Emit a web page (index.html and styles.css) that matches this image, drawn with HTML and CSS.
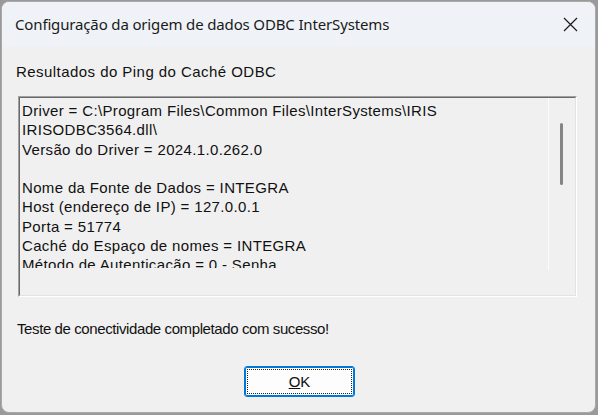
FILE: index.html
```html
<!DOCTYPE html>
<html lang="pt">
<head>
  <meta charset="UTF-8">
  <title>Configuração da origem de dados ODBC InterSystems</title>
  <link rel="stylesheet" href="styles.css">
</head>
<body>
  <div class="window">
    <div class="titlebar">
      <span class="title">Configuração da origem de dados ODBC InterSystems</span>
      <svg class="close" width="15" height="15" viewBox="0 0 15 15">
        <path d="M1 1 L14 14 M14 1 L1 14" stroke="#1a1a1a" stroke-width="1.2" fill="none"/>
      </svg>
    </div>

    <div class="content">
      <p class="label">Resultados do Ping do Caché ODBC</p>

      <div class="output">
        <div class="output-inner">
          <div class="lines">
            <div>Driver = C:\Program Files\Common Files\InterSystems\IRIS</div>
            <div>IRISODBC3564.dll\</div>
            <div>Versão do Driver = 2024.1.0.262.0</div>
            <div>&nbsp;</div>
            <div>Nome da Fonte de Dados = INTEGRA</div>
            <div>Host (endereço de IP) = 127.0.0.1</div>
            <div>Porta = 51774</div>
            <div>Caché do Espaço de nomes = INTEGRA</div>
            <div>Método de Autenticação = 0 - Senha</div>
          </div>
          <div class="scroll">
            <div class="thumb"></div>
          </div>
        </div>
      </div>

      <p class="status">Teste de conectividade completado com sucesso!</p>

      <div class="actions">
        <button class="ok"><span class="focus"><u>O</u>K</span></button>
      </div>
    </div>
  </div>
</body>
</html>
```

FILE: styles.css
```css
body {
  margin: 0;
  background: #9a9a9a;
  width: 598px;
  height: 415px;
  overflow: hidden;
}

.window {
  margin: 1px 0 0 1px;
  width: 593px;
  height: 410px;
  border: 1px solid #a9a9a9;
  border-radius: 8px;
  background: #f0f0f0;
  overflow: hidden;
  display: flex;
  flex-direction: column;
}

.titlebar {
  height: 45px;
  flex-shrink: 0;
  background: #eff3f8;
  display: flex;
  align-items: center;
  justify-content: space-between;
  padding: 0 17px 0 13px;
}

.title {
  font-family: "Noto Sans", sans-serif;
  font-size: 15px;
  letter-spacing: -0.15px;
  color: #1a1a1a;
  margin-top: -1px;
}

.close {
  margin-top: -1px;
}

.content {
  padding: 0 18px 0 16px;
  font-family: "Liberation Sans", Arial, sans-serif;
  font-size: 15px;
  color: #111;
}

.label {
  margin: 16px 0 0 -2px;
  line-height: 17px;
  letter-spacing: 0.45px;
}

.output {
  margin: 16px 0 0 0;
  border: 1px solid;
  border-color: #a0a0a0 #ffffff #ffffff #a0a0a0;
}

.output-inner {
  height: 197px;
  border: 1px solid;
  border-color: #696969 #e3e3e3 #e3e3e3 #696969;
  display: flex;
  align-items: flex-start;
}

.lines {
  flex: 1;
  box-sizing: border-box;
  height: 170px;
  overflow: hidden;
  padding: 3px 0 0 2px;
  line-height: 19.3px;
  letter-spacing: 0.35px;
  white-space: nowrap;
}

.scroll {
  width: 26px;
  height: 172px;
  border-left: 1px solid #fbfbfb;
}

.thumb {
  width: 3px;
  height: 62px;
  margin: 25px 0 0 11px;
  background: #858585;
  border-radius: 2px;
}

.status {
  margin: 23px 0 0 -1px;
  line-height: 17px;
  letter-spacing: -0.4px;
}

.actions {
  display: flex;
  justify-content: center;
  margin-top: 29px;
  padding-left: 4px;
}

.ok {
  width: 111px;
  height: 31px;
  padding: 2px;
  border: 1px solid #0078d7;
  border-radius: 3px;
  background: #fdfdfd;
  box-shadow: inset 0 0 0 1px #0078d7;
  font-family: "Liberation Sans", Arial, sans-serif;
  font-size: 15px;
  color: #111;
}

.focus {
  display: flex;
  height: 100%;
  align-items: center;
  justify-content: center;
  border: 1px dotted #222;
  box-sizing: border-box;
}
```
